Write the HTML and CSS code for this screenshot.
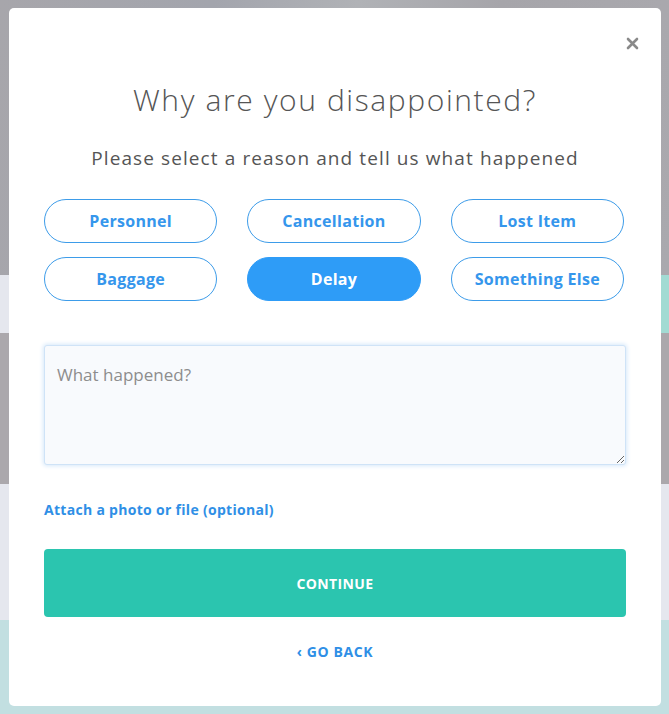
FILE: index.html
```html
<!DOCTYPE html>
<html lang="en">
<head>
    <meta charset="UTF-8">
    <meta name="viewport" content="width=device-width, initial-scale=1.0">
    <title>Why are you disappointed?</title>
    <link rel="stylesheet" href="styles.css">
</head>
<body>
    <div class="backdrop">
        <div class="band band-photo"></div>
        <div class="band band-light"><span class="band-accent"></span></div>
        <div class="band band-photo band-photo-2"></div>
        <div class="band band-light band-tall"></div>
        <div class="band band-teal"></div>
    </div>

    <div class="modal">
        <button class="close-btn" aria-label="Close">
            <svg width="13" height="13" viewBox="0 0 13 13">
                <path d="M2 2 L11 11 M11 2 L2 11" stroke="#8a8a8a" stroke-width="2.6" stroke-linecap="round"/>
            </svg>
        </button>

        <h1>Why are you disappointed?</h1>
        <p class="subtitle">Please select a reason and tell us what happened</p>

        <div class="reasons">
            <button class="reason">Personnel</button>
            <button class="reason">Cancellation</button>
            <button class="reason">Lost Item</button>
            <button class="reason">Baggage</button>
            <button class="reason selected">Delay</button>
            <button class="reason">Something Else</button>
        </div>

        <textarea class="details" placeholder="What happened?"></textarea>

        <a href="#" class="attach">Attach a photo or file (optional)</a>

        <button class="continue-btn">CONTINUE</button>

        <a href="#" class="go-back">&lsaquo; GO BACK</a>
    </div>
</body>
</html>
```

FILE: styles.css
```css
* {
    margin: 0;
    padding: 0;
    box-sizing: border-box;
}

body {
    font-family: 'Open Sans', 'Liberation Sans', sans-serif;
    height: 714px;
    overflow: hidden;
    position: relative;
}

/* blurred page behind the modal */
.backdrop {
    display: flex;
    flex-direction: column;
    height: 100%;
}

.band {
    position: relative;
}

.band-photo {
    height: 275px;
    background: linear-gradient(100deg, #a7a6ab 0%, #a3a5ad 30%, #b0b2b6 50%, #a6a5aa 70%, #aaa9ae 100%);
}

.band-photo-2 {
    height: 151px;
    background: #aba8ac;
}

.band-light {
    height: 58px;
    background: #e5e7ee;
}

.band-accent {
    position: absolute;
    right: 0;
    top: 0;
    width: 40px;
    height: 100%;
    background: #a2dbd3;
}

.band-tall {
    height: 136px;
}

.band-teal {
    flex: 1;
    background: #c2dfe1;
}

.modal {
    position: absolute;
    left: 9px;
    top: 8px;
    width: 652px;
    height: 698px;
    background: #fff;
    border-radius: 5px;
    padding: 0 35px;
    text-align: center;
}

.close-btn {
    position: absolute;
    top: 29px;
    right: 22px;
    background: none;
    border: none;
    cursor: pointer;
    line-height: 0;
}

h1 {
    font-weight: 300;
    font-size: 30px;
    color: #555;
    margin-top: 75px;
    line-height: 34px;
    letter-spacing: 1.6px;
}

.subtitle {
    font-size: 19px;
    color: #555;
    margin-top: 29px;
    line-height: 24px;
    letter-spacing: 1.1px;
}

.reasons {
    display: grid;
    grid-template-columns: repeat(3, 1fr);
    gap: 14px 30px;
    margin-top: 29px;
    padding-right: 2px;
}

.reason {
    height: 44px;
    border: 1px solid #3d9ce9;
    border-radius: 22px;
    background: #fff;
    color: #3596ec;
    font-family: 'Open Sans', 'Liberation Sans', sans-serif;
    font-weight: 700;
    font-size: 16px;
    letter-spacing: 0.3px;
    cursor: pointer;
}

.reason.selected {
    background: #2e9cf7;
    border-color: #2e9cf7;
    color: #fff;
}

.details {
    display: block;
    width: 100%;
    height: 120px;
    margin-top: 44px;
    background: #f8fafd;
    border: 1px solid #cfe3f7;
    box-shadow: 0 0 4px 1px #d6e8fa;
    border-radius: 3px;
    padding: 17px 12px;
    font-family: 'Open Sans', 'Liberation Sans', sans-serif;
    font-size: 17px;
    color: #555;
    resize: vertical;
    outline: none;
}

.details::placeholder {
    color: #8d8d8d;
}

.attach {
    display: block;
    text-align: left;
    margin-top: 35px;
    font-size: 14px;
    font-weight: 700;
    color: #2f8fe6;
    text-decoration: none;
    letter-spacing: 0.3px;
}

.continue-btn {
    display: block;
    width: 100%;
    height: 68px;
    margin-top: 30px;
    background: #2bc5af;
    border: none;
    border-radius: 4px;
    color: #fff;
    font-family: 'Open Sans', 'Liberation Sans', sans-serif;
    font-weight: 700;
    font-size: 14px;
    letter-spacing: 0.4px;
    cursor: pointer;
}

.go-back {
    display: inline-block;
    margin-top: 25px;
    font-size: 14px;
    font-weight: 700;
    color: #2f8fe6;
    text-decoration: none;
    letter-spacing: 0.6px;
}
```
